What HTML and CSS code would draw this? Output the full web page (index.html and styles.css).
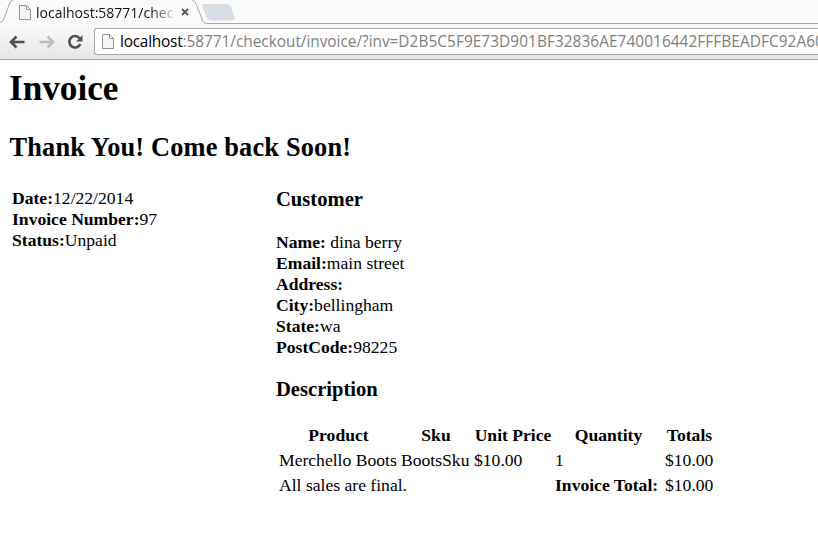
FILE: index.html
```html
<!DOCTYPE html>
<html lang="en">
<head>
<meta charset="utf-8">
<title>Invoice</title>
<link rel="stylesheet" href="styles.css">
</head>
<body>
<header class="browser">
  <div class="tabs">
    <svg class="tab-shape" width="818" height="24" viewBox="0 0 818 24">
      <path class="tab-fill" d="M0 24V22.5C3 22 4 19 5 16L9 5C10 2 11 0 14 0H191C194 0 195 2 196 4L202 19C203 22 204 23.5 208 23.5V24Z"/>
      <path class="tab-line" d="M0 22.5C3 22 4 19 5 16L9 5C10 2 11 .5 14 -.5M191 -.5C194 .5 195 2 196 4L202 19C203 22 204 23.5 208 23.5H818"/>
      <path class="new-tab" d="M204 4.5H226C229 4.5 230 5.5 231 8L234 17C234.5 19 234 20 232 20H212C209 20 208 19 207 17L203 7C202 5 202.5 4.5 204 4.5Z"/>
    </svg>
    <div class="tab">
      <svg class="page-icon" width="12" height="15" viewBox="0 0 12 15"><path d="M.5 .5H7.5L11.5 4.5V14.5H.5ZM7.5 .5V4.5H11.5"/></svg>
      <span class="tab-title">localhost:58771/chec</span>
      <svg class="close" width="8" height="8" viewBox="0 0 8 8"><path d="M1 1L7 7M7 1L1 7"/></svg>
    </div>
  </div>
  <div class="toolbar">
    <svg class="arrow" width="16" height="14" viewBox="0 0 16 14"><path d="M7.5 1.5L2 7L7.5 12.5M2.5 7H15.5"/></svg>
    <svg class="arrow forward" width="16" height="14" viewBox="0 0 16 14"><path d="M8.5 1.5L14 7L8.5 12.5M13.5 7H.5"/></svg>
    <svg class="reload" width="16" height="16" viewBox="0 0 16 16"><path class="ring" d="M12.5 4.2A5.7 5.7 0 1 0 13.3 10"/><path class="head" d="M15.5 1V7.5H9Z"/></svg>
    <div class="address">
      <svg class="page-icon" width="12" height="15" viewBox="0 0 12 15"><path d="M.5 .5H7.5L11.5 4.5V14.5H.5ZM7.5 .5V4.5H11.5"/></svg>
      <span class="url"><span class="host">localhost</span><span class="path">:58771/checkout/invoice/?inv=</span><span class="path key">D2B5C5F9E73D901BF32836AE740016442FFFBEADFC92A60</span></span>
    </div>
  </div>
</header>
<main>
  <h1>Invoice</h1>
  <h2>Thank You! Come back Soon!</h2>
  <div class="columns">
    <section class="summary">
      <p><b>Date:</b>12/22/2014</p>
      <p><b>Invoice Number:</b>97</p>
      <p><b>Status:</b>Unpaid</p>
    </section>
    <section>
      <h3>Customer</h3>
      <div class="customer">
        <p><b>Name:</b> dina berry</p>
        <p><b>Email:</b>main street</p>
        <p><b>Address:</b></p>
        <p><b>City:</b>bellingham</p>
        <p><b>State:</b>wa</p>
        <p><b>PostCode:</b>98225</p>
      </div>
      <h3>Description</h3>
      <table>
        <colgroup><col class="c1"><col class="c2"><col class="c3"><col class="c4"><col class="c5"></colgroup>
        <tr><th>Product</th><th>Sku</th><th>Unit Price</th><th>Quantity</th><th>Totals</th></tr>
        <tr><td>Merchello Boots</td><td>BootsSku</td><td>$10.00</td><td>1</td><td>$10.00</td></tr>
        <tr><td colspan="3">All sales are final.</td><td><b>Invoice Total:</b></td><td>$10.00</td></tr>
      </table>
    </section>
  </div>
</main>
</body>
</html>
```
FILE: styles.css
```css
* { box-sizing: border-box; }
body {
  margin: 0;
  background: #fff;
  color: #000;
  font: 17.6px/21px "Liberation Serif", "Times New Roman", serif;
  overflow: hidden;
}
h1, h2, h3, p { margin: 0; white-space: nowrap; }

.browser {
  height: 60px;
  border-bottom: 1px solid #a5a5a5;
  font-family: "Open Sans", sans-serif;
}
.tabs { position: relative; height: 24px; background: #fafafa; }
.tab-shape { position: absolute; top: 0; left: 0; }
.tab-fill { fill: #fbfbfb; }
.tab-line { fill: none; stroke: #a5a5a5; }
.new-tab { fill: #d8dee6; stroke: #cdd2d9; stroke-width: .6; }
.tab {
  position: relative;
  display: flex;
  align-items: center;
  height: 24px;
  padding-left: 19px;
}
.page-icon { flex: none; fill: #f6f6f6; stroke: #939393; }
.tab-title {
  width: 138px;
  margin-left: 5px;
  overflow: hidden;
  white-space: nowrap;
  font-size: 14px;
  background: linear-gradient(90deg, #111 115px, #ddd 138px);
  -webkit-background-clip: text;
  color: transparent;
}
.close { margin-left: 7px; fill: none; stroke: #555; stroke-width: 1.8; }

.toolbar {
  display: flex;
  align-items: center;
  height: 35px;
  padding-left: 9px;
  background: linear-gradient(#fbfbfb, #e6e6e6);
}
.arrow { flex: none; fill: none; stroke: #505050; stroke-width: 2.7; }
.forward { margin-left: 14px; stroke: #bdbdbd; }
.reload { flex: none; margin-left: 12px; }
.ring { fill: none; stroke: #505050; stroke-width: 2.6; }
.head { fill: #505050; }
.address {
  display: flex;
  flex: 1;
  align-items: center;
  min-width: 0;
  height: 27px;
  margin-left: 11px;
  padding-left: 7px;
  border: 1px solid #a9a9a9;
  border-right: 0;
  border-radius: 3px 0 0 3px;
  background: #fff;
  overflow: hidden;
}
.url { display: flex; margin-left: 6px; font-size: 15.4px; white-space: nowrap; }
.host { letter-spacing: -.22px; }
.path { color: #808080; letter-spacing: -.03px; }
.key { letter-spacing: .06px; }

main { padding: 7px 0 0 9px; }
h1 { height: 60px; font-size: 35.2px; line-height: 44px; }
h2 { height: 61px; font-size: 26.4px; line-height: 41px; letter-spacing: .15px; padding-left: .5px; }
.columns { display: grid; grid-template-columns: 264px 1fr; padding-left: 3px; }
h3 { height: 44px; font-size: 20.6px; line-height: 23px; }
.customer { height: 146px; }
table { width: 438px; margin-top: 1px; border-collapse: collapse; table-layout: fixed; }
.c1 { width: 122px; }
.c2 { width: 73px; }
.c3 { width: 81px; }
.c4 { width: 110px; }
.c5 { width: 52px; }
th, td { height: 25px; padding: 0 0 0 3px; white-space: nowrap; }
```
